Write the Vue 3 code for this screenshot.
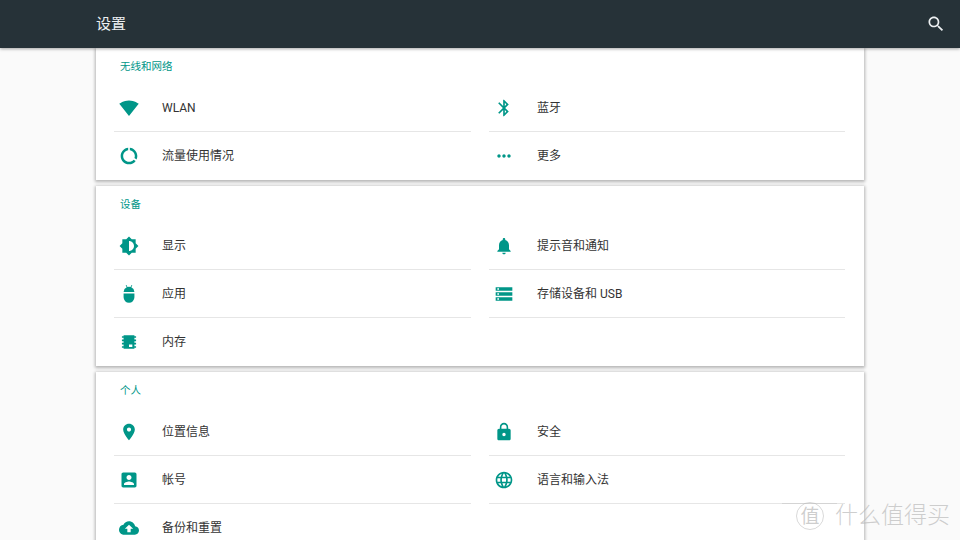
<template>
  <div class="page">
    <header class="topbar">
      <h1 class="title">设置</h1>
      <svg class="search" viewBox="0 0 24 24"><path :d="icons.search" /></svg>
    </header>

    <main class="list">
      <section v-for="group in groups" :key="group.name" class="card">
        <h2 class="group-name">{{ group.name }}</h2>
        <div class="grid">
          <div
            v-for="(item, index) in group.items"
            :key="item.label"
            class="row"
            :class="{ last: isLastRow(group, index) }"
          >
            <svg class="icon" viewBox="0 0 24 24"><path fill-rule="evenodd" :d="icons[item.icon]" /></svg>
            <span class="label">{{ item.label }}</span>
          </div>
        </div>
      </section>
    </main>

    <div class="watermark">
      <span class="mark">值</span>
      <span class="mark-text">什么值得买</span>
    </div>
  </div>
</template>

<script setup>
const icons = {
  search: 'M15.5 14h-.79l-.28-.27C15.41 12.59 16 11.11 16 9.5 16 5.91 13.09 3 9.5 3S3 5.91 3 9.5 5.91 16 9.5 16c1.61 0 3.09-.59 4.23-1.57l.27.28v.79l5 4.99L20.49 19l-4.99-5zm-6 0C7.01 14 5 11.99 5 9.5S7.01 5 9.5 5 14 7.01 14 9.5 11.99 14 9.5 14z',
  wifi: 'M12.01 21.49L23.64 7c-.45-.34-4.93-4-11.64-4C5.28 3 .81 6.66.36 7l11.63 14.49.01.01.01-.01z',
  bluetooth: 'M17.71 7.71L12 2h-1v7.59L6.41 5 5 6.41 10.59 12 5 17.59 6.41 19 11 14.41V22h1l5.71-5.71-4.3-4.29 4.3-4.29zM13 5.83l1.88 1.88L13 9.59V5.83zm1.88 10.46L13 18.17v-3.76l1.88 1.88z',
  data: 'M13 2.05v3.03c3.39.49 6 3.39 6 6.92 0 .9-.18 1.75-.48 2.54l2.6 1.53c.56-1.24.88-2.62.88-4.07 0-5.18-3.95-9.45-9-9.95zM12 19c-3.87 0-7-3.13-7-7 0-3.53 2.61-6.43 6-6.92V2.05c-5.06.5-9 4.76-9 9.95 0 5.52 4.47 10 9.99 10 3.31 0 6.24-1.61 8.06-4.09l-2.6-1.53C16.17 17.98 14.21 19 12 19z',
  more: 'M6 10c-1.1 0-2 .9-2 2s.9 2 2 2 2-.9 2-2-.9-2-2-2zm12 0c-1.1 0-2 .9-2 2s.9 2 2 2 2-.9 2-2-.9-2-2-2zm-6 0c-1.1 0-2 .9-2 2s.9 2 2 2 2-.9 2-2-.9-2-2-2z',
  brightness: 'M20 15.31L23.31 12 20 8.69V4h-4.69L12 .69 8.69 4H4v4.69L.69 12 4 15.31V20h4.69L12 23.31 15.31 20H20v-4.69zM12 18V6c3.31 0 6 2.69 6 6s-2.69 6-6 6z',
  bell: 'M12 22c1.1 0 2-.9 2-2h-4c0 1.1.89 2 2 2zm6-6v-5c0-3.07-1.64-5.64-4.5-6.32V4c0-.83-.67-1.5-1.5-1.5s-1.5.67-1.5 1.5v.68C7.63 5.36 6 7.92 6 11v5l-2 2v1h16v-1l-2-2z',
  android: 'M8 1.5l.9-.4 1.3 2.4a6 6 0 0 1 3.6 0l1.3-2.4.9.4-1.3 2.5a6.5 6.5 0 0 1 3.8 5.5H5.5a6.5 6.5 0 0 1 3.8-5.5zM5.5 11.5h13V16a6.5 6.5 0 0 1-13 0z',
  storage: 'M2 20h20v-4H2v4zm2-3h2v2H4v-2zM2 4v4h20V4H2zm4 3H4V5h2v2zm-4 7h20v-4H2v4zm2-3h2v2H4v-2z',
  memory: 'M5.5 4h13v1h2v2h-2v2h2v2h-2v2h2v2h-2v2h2v2h-2v1h-13v-1h-2v-2h2v-2h-2v-2h2v-2h-2V9h2V7h-2V5h2zM12 15v3h4v-3z',
  place: 'M12 2C8.13 2 5 5.13 5 9c0 5.25 7 13 7 13s7-7.75 7-13c0-3.87-3.13-7-7-7zm0 9.5c-1.38 0-2.5-1.12-2.5-2.5s1.12-2.5 2.5-2.5 2.5 1.12 2.5 2.5-1.12 2.5-2.5 2.5z',
  lock: 'M18 8h-1V6c0-2.76-2.24-5-5-5S7 3.24 7 6v2H6c-1.1 0-2 .9-2 2v10c0 1.1.9 2 2 2h12c1.1 0 2-.9 2-2V10c0-1.1-.9-2-2-2zm-6 9c-1.1 0-2-.9-2-2s.9-2 2-2 2 .9 2 2-.9 2-2 2zm3.1-9H8.9V6c0-1.71 1.39-3.1 3.1-3.1 1.71 0 3.1 1.39 3.1 3.1v2z',
  account: 'M3 5v14c0 1.1.89 2 2 2h14c1.1 0 2-.9 2-2V5c0-1.1-.9-2-2-2H5c-1.11 0-2 .9-2 2zm12 4c0 1.66-1.34 3-3 3s-3-1.34-3-3 1.34-3 3-3 3 1.34 3 3zm-9 8c0-2 4-3.1 6-3.1s6 1.1 6 3.1v1H6v-1z',
  language: 'M11.99 2C6.47 2 2 6.48 2 12s4.47 10 9.99 10C17.52 22 22 17.52 22 12S17.52 2 11.99 2zm6.93 6h-2.95c-.32-1.25-.78-2.45-1.38-3.56 1.84.63 3.37 1.91 4.33 3.56zM12 4.04c.83 1.2 1.48 2.53 1.91 3.96h-3.82c.43-1.43 1.08-2.76 1.91-3.96zM4.26 14C4.1 13.36 4 12.69 4 12s.1-1.36.26-2h3.38c-.08.66-.14 1.32-.14 2 0 .68.06 1.34.14 2H4.26zm.82 2h2.95c.32 1.25.78 2.45 1.38 3.56-1.84-.63-3.37-1.9-4.33-3.56zm2.95-8H5.08c.96-1.66 2.49-2.93 4.33-3.56C8.81 5.55 8.35 6.75 8.03 8zM12 19.96c-.83-1.2-1.48-2.53-1.91-3.96h3.82c-.43 1.43-1.08 2.76-1.91 3.96zM14.34 14H9.66c-.09-.66-.16-1.32-.16-2 0-.68.07-1.35.16-2h4.68c.09.65.16 1.32.16 2 0 .68-.07 1.34-.16 2zm.25 5.56c.6-1.11 1.06-2.31 1.38-3.56h2.95c-.96 1.65-2.49 2.93-4.33 3.56zM16.36 14c.08-.66.14-1.32.14-2 0-.68-.06-1.34-.14-2h3.38c.16.64.26 1.31.26 2s-.1 1.36-.26 2h-3.38z',
  cloud: 'M19.35 10.04C18.67 6.59 15.64 4 12 4 9.11 4 6.6 5.64 5.35 8.04 2.34 8.36 0 10.91 0 14c0 3.31 2.69 6 6 6h13c2.76 0 5-2.24 5-5 0-2.64-2.05-4.78-4.65-4.96zM14 13v4h-4v-4H7l5-5 5 5h-3z',
}

const groups = [
  {
    name: '无线和网络',
    items: [
      { icon: 'wifi', label: 'WLAN' },
      { icon: 'bluetooth', label: '蓝牙' },
      { icon: 'data', label: '流量使用情况' },
      { icon: 'more', label: '更多' },
    ],
  },
  {
    name: '设备',
    items: [
      { icon: 'brightness', label: '显示' },
      { icon: 'bell', label: '提示音和通知' },
      { icon: 'android', label: '应用' },
      { icon: 'storage', label: '存储设备和 USB' },
      { icon: 'memory', label: '内存' },
    ],
  },
  {
    name: '个人',
    items: [
      { icon: 'place', label: '位置信息' },
      { icon: 'lock', label: '安全' },
      { icon: 'account', label: '帐号' },
      { icon: 'language', label: '语言和输入法' },
      { icon: 'cloud', label: '备份和重置' },
    ],
  },
]

// rows in the bottom line of a card have no divider
const isLastRow = (group, index) => {
  const rows = Math.ceil(group.items.length / 2)
  return Math.floor(index / 2) === rows - 1
}
</script>

<style>
html,
body {
  margin: 0;
  height: 100%;
  overflow: hidden;
  background: #fafafa;
}
</style>

<style scoped>
.page {
  position: relative;
  width: 960px;
  height: 540px;
  overflow: hidden;
  background: #fafafa;
  font-family: "Roboto", "Noto Sans CJK SC", sans-serif;
}

.topbar {
  position: relative;
  z-index: 1;
  display: flex;
  align-items: center;
  justify-content: space-between;
  height: 48px;
  padding: 0 14px 0 96px;
  background: #263238;
  box-shadow: 0 1px 3px rgba(0, 0, 0, 0.35);
}

.title {
  margin: 0;
  font-size: 15px;
  line-height: 20px;
  font-weight: 400;
  color: #eceff1;
}

.search {
  width: 20px;
  height: 20px;
  fill: #eceff1;
}

.list {
  display: flex;
  flex-direction: column;
  gap: 6px;
  width: 768px;
  margin: 0 auto;
}

.card {
  flex: none;
  padding: 0 18px;
  background: #fff;
  box-shadow: 0 1px 3px 1px rgba(0, 0, 0, 0.28);
}

.group-name {
  height: 36px;
  margin: 0;
  padding-left: 6px;
  font-size: 10.5px;
  line-height: 38px;
  font-weight: 400;
  color: #009688;
}

.grid {
  display: grid;
  grid-template-columns: 357px 356px;
  column-gap: 18px;
}

.row {
  display: flex;
  align-items: center;
  box-sizing: border-box;
  height: 48px;
  border-bottom: 1px solid #e6e6e6;
}

.row.last {
  border-bottom: none;
}

.icon {
  flex: none;
  width: 20px;
  height: 20px;
  margin-left: 5px;
  fill: #009688;
}

.label {
  margin-left: 23px;
  font-size: 12px;
  line-height: 16px;
  color: #333;
}

.watermark {
  position: absolute;
  right: 10px;
  bottom: 10px;
  display: flex;
  align-items: center;
  gap: 11px;
  color: rgba(185, 185, 185, 0.7);
}

.mark {
  position: relative;
  display: flex;
  align-items: center;
  justify-content: center;
  box-sizing: border-box;
  width: 28px;
  height: 28px;
  border: 1px solid rgba(185, 185, 185, 0.55);
  border-radius: 50%;
  font-size: 19px;
  line-height: 1;
}

/* the thin line that runs through the top of the logo */
.mark::before {
  content: "";
  position: absolute;
  top: 0;
  left: -15px;
  width: 55px;
  height: 1px;
  background: rgba(185, 185, 185, 0.4);
}

.mark-text {
  font-size: 23px;
  font-weight: 300;
  line-height: 26px;
}
</style>
